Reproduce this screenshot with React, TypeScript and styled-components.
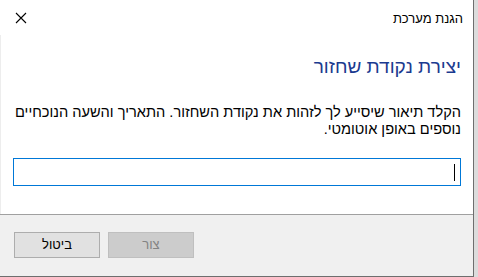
import React from "react";
import styled, { createGlobalStyle } from "styled-components";

const GlobalStyle = createGlobalStyle`
  html, body {
    margin: 0;
    padding: 0;
    background: #dcdcdc;
    font-family: "Liberation Sans", "DejaVu Sans", sans-serif;
  }
`;

const Window = styled.div`
  width: 473px;
  height: 276px;
  background: #ffffff;
  border-right: 1px solid #6e6e6e;
  border-bottom: 1px solid #6e6e6e;
  display: flex;
  flex-direction: column;
  direction: rtl;
`;

const TitleBar = styled.div`
  height: 35px;
  display: flex;
  align-items: center;
  justify-content: space-between;
  padding: 0 10px 0 13px;
  flex-shrink: 0;
`;

const Title = styled.span`
  font-size: 13px;
  color: #000;
  margin-top: 1px;
`;

const CloseButton = styled.button`
  width: 16px;
  height: 16px;
  padding: 0;
  border: none;
  background: none;
  display: flex;
  align-items: center;
  justify-content: center;
`;

const Body = styled.div`
  flex: 1;
  border-left: 1px solid #ededed;
  padding: 20px 12px 0 12px;
  display: flex;
  flex-direction: column;
`;

const Heading = styled.h1`
  margin: 0;
  font-size: 19px;
  font-weight: normal;
  color: #1b3a8f;
  line-height: 24px;
`;

const Description = styled.p`
  margin: 25px 0 0;
  font-size: 14.6px;
  line-height: 17px;
  color: #000;
  white-space: nowrap;
`;

const TextInput = styled.div`
  margin-top: 20px;
  height: 26px;
  border: 1px solid #0078d7;
  display: flex;
  align-items: center;
  padding-right: 5px;
`;

const Caret = styled.span`
  width: 1px;
  height: 17px;
  background: #000;
`;

const Footer = styled.div`
  height: 59px;
  flex-shrink: 0;
  background: #f0f0f0;
  border-top: 1px solid #a0a0a0;
  display: flex;
  align-items: center;
  justify-content: flex-end;
  gap: 8px;
  padding: 0 14px 2px;
`;

const Button = styled.button<{ $disabled?: boolean }>`
  width: 86px;
  height: 26px;
  font-family: inherit;
  font-size: 13px;
  border: 1px solid ${(p) => (p.$disabled ? "#bfbfbf" : "#adadad")};
  background: ${(p) => (p.$disabled ? "#cccccc" : "#e1e1e1")};
  color: ${(p) => (p.$disabled ? "#838383" : "#000")};
  padding: 0;
`;

export default function App() {
  return (
    <>
      <GlobalStyle />
      <Window>
        <TitleBar>
          <Title>הגנת מערכת</Title>
          <CloseButton>
            <svg width="12" height="12" viewBox="0 0 12 12">
              <path d="M1 1L11 11M11 1L1 11" stroke="#000" strokeWidth="1.1" />
            </svg>
          </CloseButton>
        </TitleBar>
        <Body>
          <Heading>יצירת נקודת שחזור</Heading>
          <Description>
            הקלד תיאור שיסייע לך לזהות את נקודת השחזור. התאריך והשעה הנוכחיים
            <br />
            נוספים באופן אוטומטי.
          </Description>
          <TextInput>
            <Caret />
          </TextInput>
        </Body>
        <Footer>
          <Button $disabled disabled>
            צור
          </Button>
          <Button>ביטול</Button>
        </Footer>
      </Window>
    </>
  );
}
